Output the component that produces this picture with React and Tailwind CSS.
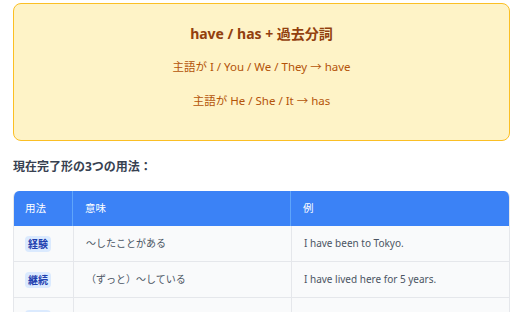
const rows = [
  { use: "経験", meaning: "〜したことがある", example: "I have been to Tokyo." },
  { use: "継続", meaning: "（ずっと）〜している", example: "I have lived here for 5 years." },
  { use: "完了", meaning: "（もう）〜した", example: "I have already finished my homework." },
];

const App = () => {
  return (
    <div
      className="w-[520px] h-[312px] overflow-hidden bg-white pl-[13px] pr-[10px] pt-[3px]"
      style={{ fontFamily: '"Noto Sans", "Noto Sans CJK JP", sans-serif' }}
    >
      {/* Formula box */}
      <div className="h-[138px] rounded-lg border border-[#fbbf24] bg-[#fef3c7] pt-[19px] text-center">
        <p className="text-[14px] leading-[22px] font-bold text-[#92400e]">
          have / has + 過去分詞
        </p>
        <p className="mt-[13px] text-[11.5px] leading-[18px] text-[#b45309]">
          主語が I / You / We / They → have
        </p>
        <p className="mt-[16px] text-[11.5px] leading-[18px] text-[#b45309]">
          主語が He / She / It → has
        </p>
      </div>

      <p className="mt-[17px] text-[12px] leading-[18px] font-bold text-[#374151]">
        現在完了形の3つの用法：
      </p>

      {/* Table */}
      <div className="mt-[15px] rounded-t-md overflow-hidden border-x border-[#e5e7eb]">
        <div className="grid grid-cols-[60px_218px_1fr] bg-[#3b82f6] text-white text-[10.5px] h-[35px] -mx-px">
          <div className="flex items-center px-3 border-r border-[#60a5fa]">用法</div>
          <div className="flex items-center px-3 border-r border-[#60a5fa]">意味</div>
          <div className="flex items-center px-3">例</div>
        </div>

        {rows.map((item, index) => (
          <div
            key={index}
            className={`grid grid-cols-[60px_218px_1fr] bg-[#f9fafb] border-b border-[#e5e7eb] text-[10px] text-[#4b5563] whitespace-nowrap ${
              index === 2 ? "h-[40px]" : "h-[36px]"
            }`}
          >
            <div className="flex items-center px-3 border-r border-[#e5e7eb] -ml-px">
              <span className="rounded bg-[#dbeafe] px-[3px] py-[1px] text-[10px] leading-[14px] font-bold text-[#1e40af]">
                {item.use}
              </span>
            </div>
            <div className="flex items-center px-3 border-r border-[#e5e7eb]">{item.meaning}</div>
            <div className="flex items-center px-3">{item.example}</div>
          </div>
        ))}
      </div>
    </div>
  );
};

export default App;
